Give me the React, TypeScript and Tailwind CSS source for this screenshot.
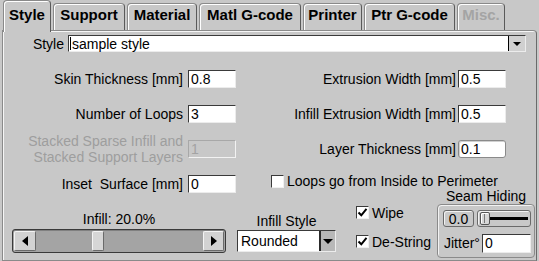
import React from "react";

const F = "font-['Liberation_Sans',Arial,Helvetica,sans-serif]";

function Field({ value, kind = "normal", w = "w-[48px]", h = "h-[18px]" }: { value: string; kind?: "normal" | "disabled" | "rounded"; w?: string; h?: string }) {
  const cls =
    kind === "disabled"
      ? "bg-[#c8c8c8] text-[#a3a3a3] border border-t-[#a8a8a8] border-l-[#a8a8a8] border-b-[#f2f2f2] border-r-[#f2f2f2]"
      : kind === "rounded"
      ? "bg-white border border-[#8a8a8a] rounded-[3px] shadow-[inset_1px_1px_0_#d0d0d0]"
      : "bg-white border border-t-[#3a3a3a] border-l-[#3a3a3a] border-b-[#ececec] border-r-[#ececec]";
  return (
    <div className={`${w} ${h} shrink-0 flex items-center pl-[2px] text-[14px] leading-none ${cls}`}>{value}</div>
  );
}

function Check({ checked }: { checked?: boolean }) {
  return (
    <div className="w-[13px] h-[13px] shrink-0 bg-white border border-t-[#3a3a3a] border-l-[#3a3a3a] border-b-[#f0f0f0] border-r-[#f0f0f0] flex items-center justify-center">
      {checked && (
        <svg width="11" height="11" viewBox="0 0 11 11">
          <path d="M1.5 5.5 L4.3 8.3 L9.5 1.8" fill="none" stroke="#000" strokeWidth="2" />
        </svg>
      )}
    </div>
  );
}

function DownArrow({ w = 9, h = 5 }: { w?: number; h?: number }) {
  return (
    <svg width={w} height={h} viewBox={`0 0 ${w} ${h}`}>
      <polygon points={`0,0 ${w},0 ${w / 2},${h}`} fill="#000" />
    </svg>
  );
}

const tabs = [
  { label: "Style", w: "w-[48px]", active: true },
  { label: "Support", w: "w-[72px]" },
  { label: "Material", w: "w-[70px]" },
  { label: "Matl G-code", w: "w-[102px]" },
  { label: "Printer", w: "w-[59px]" },
  { label: "Ptr G-code", w: "w-[91px]" },
  { label: "Misc.", w: "w-[48px]", disabled: true },
];

export default function App() {
  return (
    <div className={`w-[539px] h-[261px] bg-[#c8c8c8] overflow-hidden flex flex-col text-black text-[14px] ${F}`}>
      {/* tabs */}
      <div className="flex items-end gap-[2px] pl-[3px] h-[30px] relative z-10">
        {tabs.map((t) => (
          <div
            key={t.label}
            className={`${t.w} shrink-0 rounded-t-[4px] border border-b-0 border-[#8a8a8a] border-r-[#5a5a5a] shadow-[inset_1px_1px_0_#ffffff] bg-[#c8c8c8] flex justify-center font-bold text-[15px] leading-[17px] whitespace-nowrap ${
              t.active ? "h-[32px] -mb-[2px] pt-[5px]" : "h-[27px] pt-[2px]"
            } ${t.disabled ? "text-[#a4a4a4]" : "text-black"}`}
          >
            {t.label}
          </div>
        ))}
      </div>

      {/* panel */}
      <div className="ml-[2px] w-[535px] flex-1 border border-[#8a8a8a] border-r-[#6a6a6a] shadow-[inset_1px_1px_0_#f6f6f6] rounded-tr-[4px] flex flex-col leading-[16px]">
        {/* style row */}
        <div className="flex items-center mt-[4px] h-[17px]">
          <div className="w-[61px] text-right">Style</div>
          <div className="ml-[4px] w-[458px] h-[17px] bg-white border border-t-[#3a3a3a] border-l-[#3a3a3a] border-b-[#ececec] border-r-[#ececec] flex items-center">
            <div className="w-px h-[13px] bg-black ml-[1px]" />
            <div className="flex-1 pl-[1px] leading-none">sample style</div>
            <div className="w-[17px] h-full border-l border-black bg-[#d0d0d0] flex items-center justify-center">
              <DownArrow w={8} h={4} />
            </div>
          </div>
        </div>

        {/* form rows */}
        <div className="mt-[18px] flex flex-col gap-[17px]">
          <div className="flex items-center h-[18px]">
            <div className="w-[180px] text-right whitespace-nowrap">Skin Thickness [mm]</div>
            <div className="ml-[5px]"><Field value="0.8" /></div>
            <div className="w-[220px] text-right whitespace-nowrap">Extrusion Width [mm]</div>
            <div className="ml-[2px]"><Field value="0.5" /></div>
          </div>
          <div className="flex items-center h-[18px]">
            <div className="w-[180px] text-right whitespace-nowrap">Number of Loops</div>
            <div className="ml-[5px]"><Field value="3" /></div>
            <div className="w-[220px] text-right whitespace-nowrap">Infill Extrusion Width [mm]</div>
            <div className="ml-[2px]"><Field value="0.5" /></div>
          </div>
          <div className="flex items-center h-[18px]">
            <div className="w-[180px] text-right whitespace-nowrap text-[#9e9e9e]">
              <div>Stacked Sparse Infill and</div>
              <div>Stacked Support Layers</div>
            </div>
            <div className="ml-[5px]"><Field value="1" kind="disabled" /></div>
            <div className="w-[220px] text-right whitespace-nowrap">Layer Thickness [mm]</div>
            <div className="ml-[2px]"><Field value="0.1" kind="rounded" /></div>
          </div>
          <div className="flex items-center h-[18px]">
            <div className="w-[180px] text-right whitespace-pre">Inset  Surface [mm]</div>
            <div className="ml-[5px]"><Field value="0" /></div>
            <div className="ml-[35px] self-start -mt-[2px] flex items-center gap-[3px] whitespace-nowrap">
              <Check />
              <span>Loops go from Inside to Perimeter</span>
            </div>
          </div>
        </div>

        {/* bottom section */}
        <div className="flex flex-1">
          {/* infill slider */}
          <div className="ml-[9px] w-[214px] flex flex-col pt-[18px]">
            <div className="text-center">Infill: 20.0%</div>
            <div className="mt-[2px] h-[24px] w-[214px] rounded-[3px] border border-[#3a3a3a] bg-[#a4a4a4] flex items-stretch p-[1px] shadow-[inset_0_1px_0_#808080]">
              <div className="w-[22px] bg-[#d2d2d2] border border-t-[#f4f4f4] border-l-[#f4f4f4] border-b-[#6a6a6a] border-r-[#6a6a6a] rounded-[2px] flex items-center justify-center">
                <svg width="6" height="10" viewBox="0 0 6 10"><polygon points="6,0 6,10 0,5" fill="#000" /></svg>
              </div>
              <div className="flex-1 flex items-stretch">
                <div className="ml-[56px] w-[12px] bg-[#d6d6d6] border border-t-[#f4f4f4] border-l-[#f4f4f4] border-b-[#6a6a6a] border-r-[#6a6a6a] rounded-[2px]" />
              </div>
              <div className="w-[21px] bg-[#d2d2d2] border border-t-[#f4f4f4] border-l-[#f4f4f4] border-b-[#6a6a6a] border-r-[#6a6a6a] rounded-[2px] flex items-center justify-center">
                <svg width="6" height="10" viewBox="0 0 6 10"><polygon points="0,0 0,10 6,5" fill="#000" /></svg>
              </div>
            </div>
          </div>

          {/* infill style */}
          <div className="ml-[11px] w-[99px] flex flex-col pt-[20px]">
            <div className="text-center">Infill Style</div>
            <div className="mt-[1px] h-[22px] bg-white border border-t-[#3a3a3a] border-l-[#3a3a3a] border-b-[#ececec] border-r-[#ececec] flex items-stretch">
              <div className="flex-1 pl-[3px] flex items-center leading-none">Rounded</div>
              <div className="w-[16px] border-l-2 border-[#2a2a2a] bg-[#b8b8b8] flex items-center justify-center">
                <DownArrow w={10} h={5} />
              </div>
            </div>
          </div>

          {/* checkboxes */}
          <div className="ml-[20px] w-[81px] flex flex-col pt-[13px]">
            <div className="flex items-center gap-[3px] h-[13px]">
              <Check checked />
              <span>Wipe</span>
            </div>
            <div className="flex items-center gap-[3px] h-[13px] mt-[16px]">
              <Check checked />
              <span>De-String</span>
            </div>
          </div>

          {/* seam hiding */}
          <div className="w-[98px] flex flex-col -mt-[5px]">
            <div className="text-center">Seam Hiding</div>
            <div className="h-[54px] rounded-[4px] border border-[#8a8a8a] shadow-[inset_1px_1px_0_#f2f2f2] pl-[5px] pt-[5px] flex flex-col">
              <div className="flex items-center h-[17px]">
                <div className="w-[31px] h-[17px] rounded-[3px] border border-[#6a6a6a] shadow-[inset_1px_1px_0_#f2f2f2] flex items-center justify-center leading-none">0.0</div>
                <div className="ml-[3px] w-[54px] h-[17px] rounded-[3px] border border-[#6a6a6a] shadow-[inset_1px_1px_0_#f2f2f2] flex items-center pl-[2px] pr-[2px]">
                  <div className="w-[10px] h-[13px] rounded-[2px] border border-[#555] bg-[#d6d6d6] shadow-[inset_1px_1px_0_#ffffff] shrink-0 flex items-center justify-center">
                    <div className="w-[2px] h-[9px] border-l border-[#777]" />
                  </div>
                  <div className="flex-1 h-[3px] bg-black" />
                </div>
              </div>
              <div className="flex items-center mt-[7px] h-[18px]">
                <div className="w-[39px] pl-[1px] whitespace-nowrap">Jitter°</div>
                <Field value="0" w="w-[49px]" h="h-[19px]" />
              </div>
            </div>
          </div>
        </div>
      </div>
    </div>
  );
}
